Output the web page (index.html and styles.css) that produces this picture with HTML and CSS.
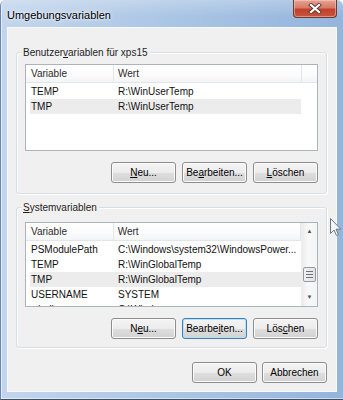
FILE: index.html
```html
<!DOCTYPE html>
<html lang="de">
<head>
  <meta charset="UTF-8">
  <meta name="viewport" content="width=device-width, initial-scale=1.0">
  <title>Umgebungsvariablen</title>
  <link rel="stylesheet" href="styles.css">
</head>
<body>
  <div class="window">
    <div class="titlebar">
      <span class="title">Umgebungsvariablen</span>
      <div class="close-btn">
        <svg width="14" height="11" viewBox="0 0 14 11">
          <path d="M3 2 L11 9 M11 2 L3 9" stroke="#5a3a3a" stroke-width="4" stroke-linecap="square"/>
          <path d="M3 2 L11 9 M11 2 L3 9" stroke="#ffffff" stroke-width="2.2" stroke-linecap="square"/>
        </svg>
      </div>
    </div>

    <div class="client">
      <!-- User variables -->
      <div class="group group-user">
        <span class="group-title">Benutzer<u>v</u>ariablen für xps15</span>
        <div class="list list-user">
          <div class="list-main">
            <div class="list-head">
              <span class="col-var">Variable</span>
              <span class="col-val">Wert</span>
              <span class="col-rest"></span>
            </div>
            <div class="list-body">
              <div class="row"><span class="col-var">TEMP</span><span class="col-val">R:\WinUserTemp</span></div>
              <div class="row selected"><span class="col-var">TMP</span><span class="col-val">R:\WinUserTemp</span></div>
            </div>
          </div>
        </div>
        <div class="button-row">
          <button class="btn"><u>N</u>eu...</button>
          <button class="btn">Be<u>a</u>rbeiten...</button>
          <button class="btn"><u>L</u>öschen</button>
        </div>
      </div>

      <!-- System variables -->
      <div class="group group-system">
        <span class="group-title"><u>S</u>ystemvariablen</span>
        <div class="list list-system">
          <div class="list-main">
            <div class="list-head">
              <span class="col-var">Variable</span>
              <span class="col-val">Wert</span>
            </div>
            <div class="list-body">
              <div class="row"><span class="col-var">PSModulePath</span><span class="col-val">C:\Windows\system32\WindowsPower...</span></div>
              <div class="row"><span class="col-var">TEMP</span><span class="col-val">R:\WinGlobalTemp</span></div>
              <div class="row selected"><span class="col-var">TMP</span><span class="col-val">R:\WinGlobalTemp</span></div>
              <div class="row"><span class="col-var">USERNAME</span><span class="col-val">SYSTEM</span></div>
              <div class="row"><span class="col-var">windir</span><span class="col-val">C:\Windows</span></div>
            </div>
          </div>
          <div class="scrollbar">
            <div class="scroll-btn">&#9650;</div>
            <div class="scroll-track">
              <div class="scroll-thumb"><span></span><span></span><span></span></div>
            </div>
            <div class="scroll-btn">&#9660;</div>
          </div>
        </div>
        <div class="button-row">
          <button class="btn">N<u>e</u>u...</button>
          <button class="btn btn-default">Bearbe<u>i</u>ten...</button>
          <button class="btn">Lös<u>c</u>hen</button>
        </div>
      </div>

      <div class="dialog-buttons">
        <button class="btn">OK</button>
        <button class="btn">Abbrechen</button>
      </div>
    </div>

    <svg class="cursor" width="12" height="19" viewBox="0 0 12 19">
      <path d="M0.5 0.5 L0.5 15.5 L4 12 L6.5 17.5 L8.5 16.5 L6 11.2 L10.8 11.2 Z" fill="#f4f6f8" stroke="#6d7683" stroke-width="1"/>
    </svg>
  </div>
</body>
</html>
```

FILE: styles.css
```css
/* General */
* {
  margin: 0;
  padding: 0;
  box-sizing: border-box;
}

body {
  background: #ffffff;
  font-family: 'Liberation Sans', Arial, sans-serif;
  font-size: 10px;
  color: #000;
}

u {
  text-decoration: underline;
  text-underline-offset: 1px;
}

/* Window frame */
.window {
  position: relative;
  width: 343px;
  height: 400px;
  display: flex;
  flex-direction: column;
  background: linear-gradient(to right, #c2d5ec 0%, #adc7e5 45%, #94b4dc 100%);
  border-left: 1px solid #6a87ad;
  border-bottom: 1px solid #3e4f66;
  border-radius: 6px 6px 0 0;
  box-shadow: inset 1px 0 0 rgba(255, 255, 255, 0.55), inset 0 -1px 0 rgba(255, 255, 255, 0.5);
}

.titlebar {
  height: 27px;
  display: flex;
  justify-content: space-between;
  align-items: flex-start;
  background: linear-gradient(to bottom, rgba(255, 255, 255, 0.25), rgba(255, 255, 255, 0) 60%);
}

.title {
  padding: 8px 0 0 6px;
  line-height: 14px;
  font-size: 11px;
  color: #000;
  text-shadow: 0 0 6px rgba(255, 255, 255, 0.9), 0 0 3px rgba(255, 255, 255, 0.9);
}

.close-btn {
  width: 44px;
  height: 18px;
  margin-right: 6px;
  display: flex;
  justify-content: center;
  align-items: center;
  border: 1px solid #6b3a33;
  border-top: none;
  border-radius: 0 0 4px 4px;
  background: linear-gradient(to bottom, #e6a394 0%, #d67b66 45%, #c2412a 55%, #c9543c 100%);
  box-shadow: inset 0 0 0 1px rgba(255, 220, 210, 0.45);
}

/* Client area */
.client {
  flex: 1;
  margin: 0 6px 7px 6px;
  background: #f0f0f0;
  border: 1px solid #f7fafd;
  display: flex;
  flex-direction: column;
}

.group {
  position: relative;
  margin: 0 9px 0 8px;
  border: 1px solid #d5dfe5;
  border-radius: 3px;
  box-shadow: inset 1px 1px 0 #ffffff, 1px 1px 0 #ffffff;
  padding: 0 8px;
}

.group-user {
  margin-top: 24px;
  padding-top: 11px;
  padding-bottom: 10px;
}

.group-system {
  margin-top: 13px;
  padding-top: 14px;
  padding-bottom: 8px;
}

.group-title {
  position: absolute;
  top: -7px;
  left: 4px;
  padding: 0 2px;
  background: #f0f0f0;
  line-height: 13px;
  color: #1e1e1e;
}

/* List views */
.list {
  display: flex;
  background: #ffffff;
  border: 1px solid #adb2bb;
  overflow: hidden;
}

.list-user {
  height: 87px;
}

.list-system {
  height: 85px;
}

.list-main {
  flex: 1;
  overflow: hidden;
}

.list-head {
  display: flex;
  height: 18px;
  line-height: 17px;
  color: #2b2b2b;
  background: linear-gradient(to bottom, #ffffff 0%, #fbfbfb 60%, #f3f4f6 100%);
  border-bottom: 1px solid #e2e5ea;
}

.list-head .col-var {
  width: 88px;
  padding-left: 5px;
  border-right: 1px solid #e3e6eb;
}

.list-head .col-val {
  width: 188px;
  padding-left: 4px;
  border-right: 1px solid #e3e6eb;
}

.list-head .col-rest {
  flex: 1;
}

.list-body {
  padding: 1px 0 0 4px;
}

.row {
  display: flex;
  width: 271px;
  height: 15px;
  line-height: 15px;
  white-space: nowrap;
  color: #111;
}

.row.selected {
  background: #ececec;
}

.row .col-var {
  width: 84px;
  padding-left: 1px;
}

.row .col-val {
  flex: 1;
  padding-left: 4px;
  overflow: hidden;
}

/* Scrollbar */
.scrollbar {
  width: 16px;
  display: flex;
  flex-direction: column;
  background: linear-gradient(to right, #ececec, #f8f8f8 40%, #f4f4f4);
  border-left: 1px solid #eeeeee;
}

.scroll-btn {
  height: 17px;
  line-height: 17px;
  text-align: center;
  font-size: 6px;
  color: #4d4f55;
}

.scroll-track {
  flex: 1;
  padding-top: 27px;
}

.scroll-thumb {
  height: 15px;
  margin: 0 1px;
  border: 1px solid #979aa0;
  border-radius: 2px;
  background: linear-gradient(to right, #f1f1f1, #e2e2e2);
  display: flex;
  flex-direction: column;
  align-items: center;
  justify-content: center;
  gap: 2px;
}

.scroll-thumb span {
  width: 7px;
  height: 1px;
  background: #6f727a;
}

/* Buttons */
.button-row {
  display: flex;
  justify-content: flex-end;
  gap: 6px;
  margin-top: 11px;
}

.btn {
  width: 65px;
  height: 21px;
  font-family: 'Liberation Sans', Arial, sans-serif;
  font-size: 10px;
  color: #000;
  border: 1px solid #8d8d8d;
  border-radius: 3px;
  background: linear-gradient(to bottom, #f4f4f4 0%, #ececec 50%, #dedede 51%, #d2d2d2 100%);
  box-shadow: inset 0 0 0 1px #fbfbfb;
}

.btn-default {
  border-color: #3c7fb1;
  box-shadow: inset 0 0 0 1px #b9e0f7;
}

.dialog-buttons {
  display: flex;
  justify-content: flex-end;
  gap: 5px;
  margin: 14px 9px 0 0;
}

/* Mouse pointer */
.cursor {
  position: absolute;
  left: 329px;
  top: 218px;
}
```
